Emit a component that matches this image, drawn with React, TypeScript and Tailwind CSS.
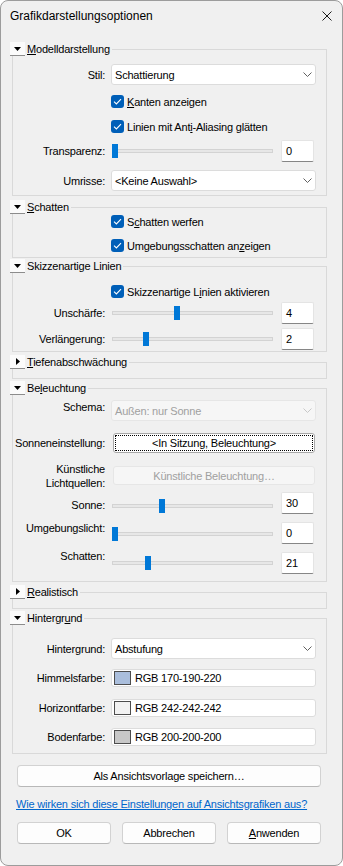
import React from 'react'

function Arrow({ open }: { open: boolean }): React.JSX.Element {
  return (
    <span className="w-[15px] h-[14px] bg-[#fbfbfb] border-b border-[#8c8c8c] flex items-center justify-center">
      {open ? (
        <svg width="7" height="4" viewBox="0 0 7 4">
          <path d="M0 0h7L3.5 4z" fill="#000" />
        </svg>
      ) : (
        <svg width="4" height="7" viewBox="0 0 4 7">
          <path d="M0 0v7L4 3.5z" fill="#000" />
        </svg>
      )}
    </span>
  )
}

function Group({
  title,
  open = true,
  className,
  children,
}: {
  title: React.ReactNode
  open?: boolean
  className: string
  children?: React.ReactNode
}): React.JSX.Element {
  return (
    <fieldset className={`ml-[11px] w-[315px] border border-[#d9d9d9] ${className}`}>
      <legend className="-ml-[3px] h-[14px]">
        <div className="flex items-center h-[14px]">
          <Arrow open={open} />
          <span className="pl-[2px] pr-[2px]">{title}</span>
        </div>
      </legend>
      {open ? children : <div className="h-[9px]" />}
    </fieldset>
  )
}

function Label({ children, className = '' }: { children: React.ReactNode; className?: string }): React.JSX.Element {
  return <div className={`w-[92px] shrink-0 text-right ${className}`}>{children}</div>
}

function Select({ text, disabled }: { text: string; disabled?: boolean }): React.JSX.Element {
  return (
    <div
      className={`ml-[6px] w-[205px] h-[21px] rounded-[3px] border flex items-center pl-[3px] pr-[3px] ${disabled ? 'bg-[#f6f6f6] border-[#e6e6e6] text-[#a0a0a0]' : 'bg-white border-[#dcdcdc]'}`}
    >
      <span className="flex-1">{text}</span>
      <svg width="9" height="5" viewBox="0 0 9 5">
        <path d="M0.5 0.5 4.5 4.5 8.5 0.5" fill="none" stroke={disabled ? '#c8c8c8' : '#606060'} strokeWidth="1" />
      </svg>
    </div>
  )
}

function Check({ children, className }: { children: React.ReactNode; className: string }): React.JSX.Element {
  return (
    <div className={`flex items-center h-[13px] pl-[98px] ${className}`}>
      <span className="w-[13px] h-[13px] shrink-0 rounded-[3px] bg-[#005fb8] flex items-center justify-center">
        <svg width="9" height="7" viewBox="0 0 9 7">
          <path d="M1 3.6 3.4 6 8 1.2" fill="none" stroke="#fff" strokeWidth="1.1" />
        </svg>
      </span>
      <span className="ml-[3px]">{children}</span>
    </div>
  )
}

function Slider({ value, max }: { value: number; max: number }): React.JSX.Element {
  const left = Math.round((value / max) * 155)
  return (
    <div className="relative w-[161px] h-[14px]">
      <div className="absolute left-0 right-0 top-[5px] h-[4px] bg-[#e7e7e7] border border-[#d3d3d3]" />
      <div className="absolute top-0 h-[14px] w-[6px] bg-[#0078d7]" style={{ left }} />
    </div>
  )
}

function Edit({ value }: { value: string }): React.JSX.Element {
  return (
    <div className="ml-[8px] w-[33px] h-[22px] shrink-0 bg-white border border-[#e4e4e4] border-b-[#868686] rounded-[2px] pl-[4px] flex items-center">
      {value}
    </div>
  )
}

function ColorField({ color, text }: { color: string; text: string }): React.JSX.Element {
  return (
    <div className="ml-[6px] w-[205px] h-[18px] bg-white border border-[#dcdcdc] rounded-[3px] flex items-center pl-[2px]">
      <span className="w-[17px] h-[14px] border border-[#4d4d4d]" style={{ backgroundColor: color }} />
      <span className="ml-[4px]">{text}</span>
    </div>
  )
}

function Button({ children, className }: { children: React.ReactNode; className: string }): React.JSX.Element {
  return (
    <div
      className={`h-[22px] bg-[#fdfdfd] border border-[#d2d2d2] border-b-[#b8b8b8] rounded-[4px] flex items-center justify-center ${className}`}
    >
      {children}
    </div>
  )
}

export default function App(): React.JSX.Element {
  return (
    <div className="w-[343px] h-[866px] bg-[#f0f0f0] border border-[#9c9c9c] rounded-[8px] overflow-hidden text-[11px] leading-[14px] tracking-[-0.2px] text-black font-['Liberation_Sans',Arial,sans-serif]">
      {/* title bar */}
      <div className="h-[30px] flex items-center pl-[9px] pr-[10px] tracking-normal">
        <span className="flex-1 text-[12px]">Grafikdarstellungsoptionen</span>
        <svg width="10" height="10" viewBox="0 0 10 10">
          <path d="M0.5 0.5 9.5 9.5M9.5 0.5 0.5 9.5" stroke="#1b1b1b" strokeWidth="1" />
        </svg>
      </div>

      <Group
        className="mt-[11px] pb-[4px]"
        title={
          <>
            <u>M</u>odelldarstellung
          </>
        }
      >
        <div className="flex items-center h-[21px] mt-[8px]">
          <Label>Stil:</Label>
          <Select text="Schattierung" />
        </div>
        <Check className="mt-[10px]">
          <u>K</u>anten anzeigen
        </Check>
        <Check className="mt-[12px]">
          Linien mit Ant<u>i</u>-Aliasing glätten
        </Check>
        <div className="flex items-center h-[22px] mt-[7px]">
          <Label>Transparenz:</Label>
          <div className="ml-[7px]">
            <Slider value={0} max={100} />
          </div>
          <Edit value="0" />
        </div>
        <div className="flex items-center h-[21px] mt-[8px]">
          <Label>Umrisse:</Label>
          <Select text="<Keine Auswahl>" />
        </div>
      </Group>

      <Group
        className="mt-[4px] pb-[5px]"
        title={
          <>
            <u>S</u>chatten
          </>
        }
      >
        <Check className="mt-[1px]">
          S<u>c</u>hatten werfen
        </Check>
        <Check className="mt-[11px]">
          Umgebungsschatten an<u>z</u>eigen
        </Check>
      </Group>

      <Group className="mt-[1px] pb-[1px]" title="Skizzenartige Linien">
        <Check className="mt-[12px]">
          Skizzenartige L<u>i</u>nien aktivieren
        </Check>
        <div className="flex items-center h-[22px] mt-[4px]">
          <Label>Unschärfe:</Label>
          <div className="ml-[7px]">
            <Slider value={4} max={10} />
          </div>
          <Edit value="4" />
        </div>
        <div className="flex items-center h-[22px] mt-[4px]">
          <Label>Verlängerung:</Label>
          <div className="ml-[7px]">
            <Slider value={2} max={10} />
          </div>
          <Edit value="2" />
        </div>
      </Group>

      <Group
        className="mt-[3px]"
        open={false}
        title={
          <>
            <u>T</u>iefenabschwächung
          </>
        }
      />

      <Group
        className="mt-[2px] pb-[7px]"
        title={
          <>
            Be<u>l</u>euchtung
          </>
        }
      >
        <div className="flex items-start h-[21px] mt-[5px]">
          <Label>Schema:</Label>
          <Select text="Außen: nur Sonne" disabled />
        </div>
        <div className="flex items-center h-[20px] mt-[12px]">
          <Label>Sonneneinstellung:</Label>
          <div className="ml-[8px] w-[202px] h-[20px] bg-white border border-[#a8a8a8] rounded-[3px] p-[1px]">
            <div className="h-full border border-dotted border-black flex items-center justify-center">
              &lt;In Sitzung, Beleuchtung&gt;
            </div>
          </div>
        </div>
        <div className="flex items-center h-[19px] mt-[13px]">
          <Label>
            Künstliche
            <br />
            Lichtquellen:
          </Label>
          <div className="ml-[8px] w-[202px] h-[19px] bg-[#f6f6f6] border border-[#e6e6e6] rounded-[3px] flex items-center justify-center text-[#a0a0a0]">
            Künstliche Beleuchtung…
          </div>
        </div>
        <div className="flex items-start h-[22px] mt-[7px]">
          <Label className="mt-[6px]">Sonne:</Label>
          <div className="ml-[7px] mt-[7px]">
            <Slider value={30} max={100} />
          </div>
          <Edit value="30" />
        </div>
        <div className="flex items-start h-[22px] mt-[8px]">
          <Label className="-mt-[1px]">Umgebungslicht:</Label>
          <div className="ml-[7px] mt-[5px]">
            <Slider value={0} max={100} />
          </div>
          <Edit value="0" />
        </div>
        <div className="flex items-start h-[22px] mt-[8px]">
          <Label className="-mt-[3px]">Schatten:</Label>
          <div className="ml-[7px] mt-[4px]">
            <Slider value={21} max={100} />
          </div>
          <Edit value="21" />
        </div>
      </Group>

      <Group
        className="mt-[3px]"
        open={false}
        title={
          <>
            <u>R</u>ealistisch
          </>
        }
      />

      <Group
        className="mt-[2px] pb-[7px]"
        title={
          <>
            Hintergr<u>u</u>nd
          </>
        }
      >
        <div className="flex items-center h-[21px] mt-[13px]">
          <Label>Hintergrund:</Label>
          <Select text="Abstufung" />
        </div>
        <div className="flex items-center h-[18px] mt-[10px]">
          <Label>Himmelsfarbe:</Label>
          <ColorField color="rgb(170,190,220)" text="RGB 170-190-220" />
        </div>
        <div className="flex items-center h-[18px] mt-[12px]">
          <Label>Horizontfarbe:</Label>
          <ColorField color="rgb(242,242,242)" text="RGB 242-242-242" />
        </div>
        <div className="flex items-center h-[18px] mt-[11px]">
          <Label>Bodenfarbe:</Label>
          <ColorField color="rgb(200,200,200)" text="RGB 200-200-200" />
        </div>
      </Group>

      <Button className="mt-[11px] ml-[16px] w-[304px]">Als Ansichtsvorlage speichern…</Button>

      <div className="mt-[10px] ml-[15px] text-[#0066cc] underline">
        Wie wirken sich diese Einstellungen auf Ansichtsgrafiken aus?
      </div>

      <div className="mt-[11px] ml-[16px] flex gap-[11px]">
        <Button className="w-[94px]">OK</Button>
        <Button className="w-[94px]">Abbrechen</Button>
        <Button className="w-[94px]">
          <span>
            <u>A</u>nwenden
          </span>
        </Button>
      </div>
    </div>
  )
}
